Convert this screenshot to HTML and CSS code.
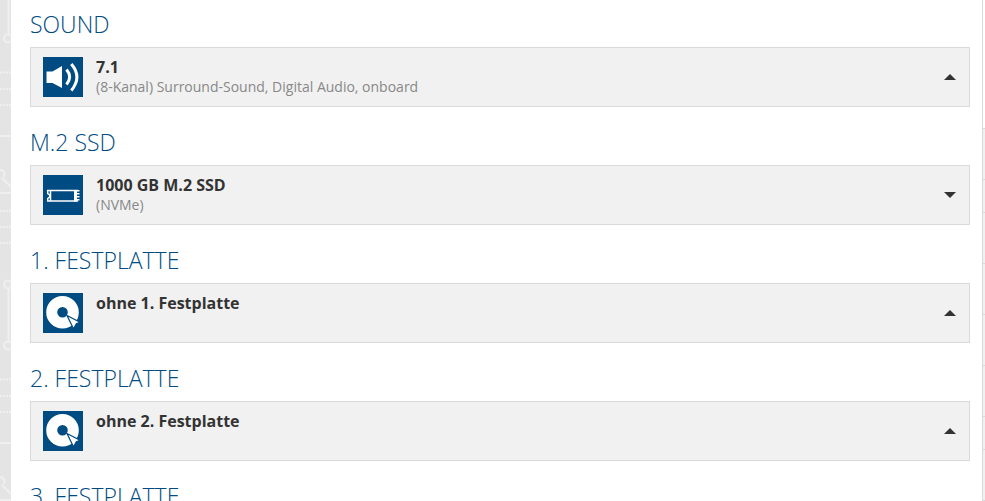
FILE: index.html
```
<!DOCTYPE html>
<html lang="de">
<head>
<meta charset="utf-8">
<title>Konfigurator</title>
<link rel="stylesheet" href="styles.css">
</head>
<body>
<svg class="symbols" aria-hidden="true">
  <symbol id="disc" viewBox="0 0 40 40">
    <circle cx="19.5" cy="19.2" r="10.8" fill="none" stroke="#fff" stroke-width="11"/>
    <path d="M24 22.5 37 29.2 33.4 30.8 30.5 35.8Z" fill="#fff" stroke="#004b82" stroke-width="1.2"/>
  </symbol>
  <symbol id="up" viewBox="0 0 12 6"><path d="M0 6 6 0 12 6Z" fill="#333"/></symbol>
  <symbol id="down" viewBox="0 0 12 6"><path d="M0 0 6 6 12 0Z" fill="#333"/></symbol>
</svg>
<div class="page">
  <div class="circuit" aria-hidden="true">
    <svg width="11" height="612">
      <defs>
        <pattern id="board" width="11" height="307" patternUnits="userSpaceOnUse">
          <g fill="none" stroke="#efefef" stroke-width="2">
            <path d="M8.5 0V34M8.5 289V307"/>
            <circle cx="8" cy="38.500" r="4"/>
            <circle cx="8" cy="284.500" r="4"/>
            <path d="M0 136H11M0 193H11M0 170A4 4 0 0 1 3 177M2 178 11 187"/>
            <path d="M0 72.500H11M0 89H11M0 105H11M0 211H11M0 227H11M0 243H11" stroke-dasharray="2 1"/>
          </g>
        </pattern>
      </defs>
      <rect width="11" height="612" fill="url(#board)"/>
    </svg>
  </div>
  <main class="options">
    <section class="option">
      <h2>SOUND</h2>
      <button class="choice" type="button">
        <svg class="icon" viewBox="0 0 40 40" aria-hidden="true">
          <path d="M3.500 14.500H9.500L19 9V31L9.500 26H3.500Z" fill="#fff"/>
          <path d="M23.500 12.500Q29.800 20 23.500 27.500M28.300 7Q39.500 20 28.300 33.500" fill="none" stroke="#fff" stroke-width="3"/>
        </svg>
        <span class="label"><strong>7.1</strong><small>(8-Kanal) Surround-Sound, Digital Audio, onboard</small></span>
        <svg class="arrow" aria-hidden="true"><use href="#up"/></svg>
      </button>
    </section>
    <section class="option">
      <h2>M.2 SSD</h2>
      <button class="choice" type="button">
        <svg class="icon" viewBox="0 0 40 40" aria-hidden="true">
          <path d="M4 15.500H35M4 26H35M4.700 15V18.500L6.700 20V22L4.700 23.500V26M7.500 16V25.500" fill="none" stroke="#fff" stroke-width="1.500"/>
          <path d="M31 15H34V26.500H31Z" fill="#fff"/>
          <path d="M35 15V27" stroke="#fff" stroke-width="3" stroke-dasharray="1.500 1.500"/>
        </svg>
        <span class="label"><strong>1000 GB M.2 SSD</strong><small>(NVMe)</small></span>
        <svg class="arrow" aria-hidden="true"><use href="#down"/></svg>
      </button>
    </section>
    <section class="option">
      <h2>1. FESTPLATTE</h2>
      <button class="choice" type="button">
        <svg class="icon" aria-hidden="true"><use href="#disc"/></svg>
        <span class="label"><strong>ohne 1. Festplatte</strong></span>
        <svg class="arrow" aria-hidden="true"><use href="#up"/></svg>
      </button>
    </section>
    <section class="option">
      <h2>2. FESTPLATTE</h2>
      <button class="choice" type="button">
        <svg class="icon" aria-hidden="true"><use href="#disc"/></svg>
        <span class="label"><strong>ohne 2. Festplatte</strong></span>
        <svg class="arrow" aria-hidden="true"><use href="#up"/></svg>
      </button>
    </section>
    <section class="option">
      <h2>3. FESTPLATTE</h2>
    </section>
  </main>
  <div class="summary" aria-hidden="true">
    <div class="row"></div>
    <div class="row short"></div>
    <div class="row"></div>
    <div class="row"></div>
    <div class="row"></div>
    <div class="row"></div>
    <div class="row short"></div>
    <div class="row"></div>
    <div class="row"></div>
  </div>
</div>
</body>
</html>
```

FILE: styles.css
```
* {
  box-sizing: border-box;
}

body {
  margin: 0;
  background: #fff;
  font-family: "Open Sans", "Noto Sans", sans-serif;
  color: #333;
}

.symbols {
  position: absolute;
  width: 0;
  height: 0;
}

.page {
  display: grid;
  grid-template-columns: 11px 1fr 2px;
  height: 100vh;
  overflow: hidden;
}

.circuit {
  background: #e4e4e4;
  overflow: hidden;
}

.circuit svg {
  display: block;
}

.options {
  display: flex;
  flex-direction: column;
  gap: 18px;
  padding: 7px 12px 0 19px;
  border-right: 1px solid #dadada;
}

.option h2 {
  margin: 0 0 6px;
  font-size: 23px;
  font-weight: 300;
  line-height: 34px;
  color: #004b82;
}

.choice {
  display: flex;
  align-items: flex-start;
  width: 100%;
  min-height: 60px;
  padding: 9px 13px 9px 12px;
  border: 1px solid #dadada;
  border-radius: 0;
  background: #f1f1f1;
  color: inherit;
  font: inherit;
  text-align: left;
  cursor: pointer;
}

.icon {
  flex: none;
  width: 40px;
  height: 40px;
  margin-right: 13px;
  background: #004b82;
}

.label {
  flex: 1;
}

.label strong,
.label small {
  display: block;
}

.label strong {
  font-size: 16px;
  font-weight: 700;
  line-height: 20px;
}

.label small {
  font-size: 14px;
  line-height: 20px;
  color: #888;
}

.arrow {
  flex: none;
  align-self: center;
  width: 12px;
  height: 6px;
}

.summary {
  padding-top: 128px;
}

.row {
  height: 51px;
  border-top: 1px solid #dadada;
  background: #f1f1f1;
}

.row.short {
  height: 33px;
}
```
